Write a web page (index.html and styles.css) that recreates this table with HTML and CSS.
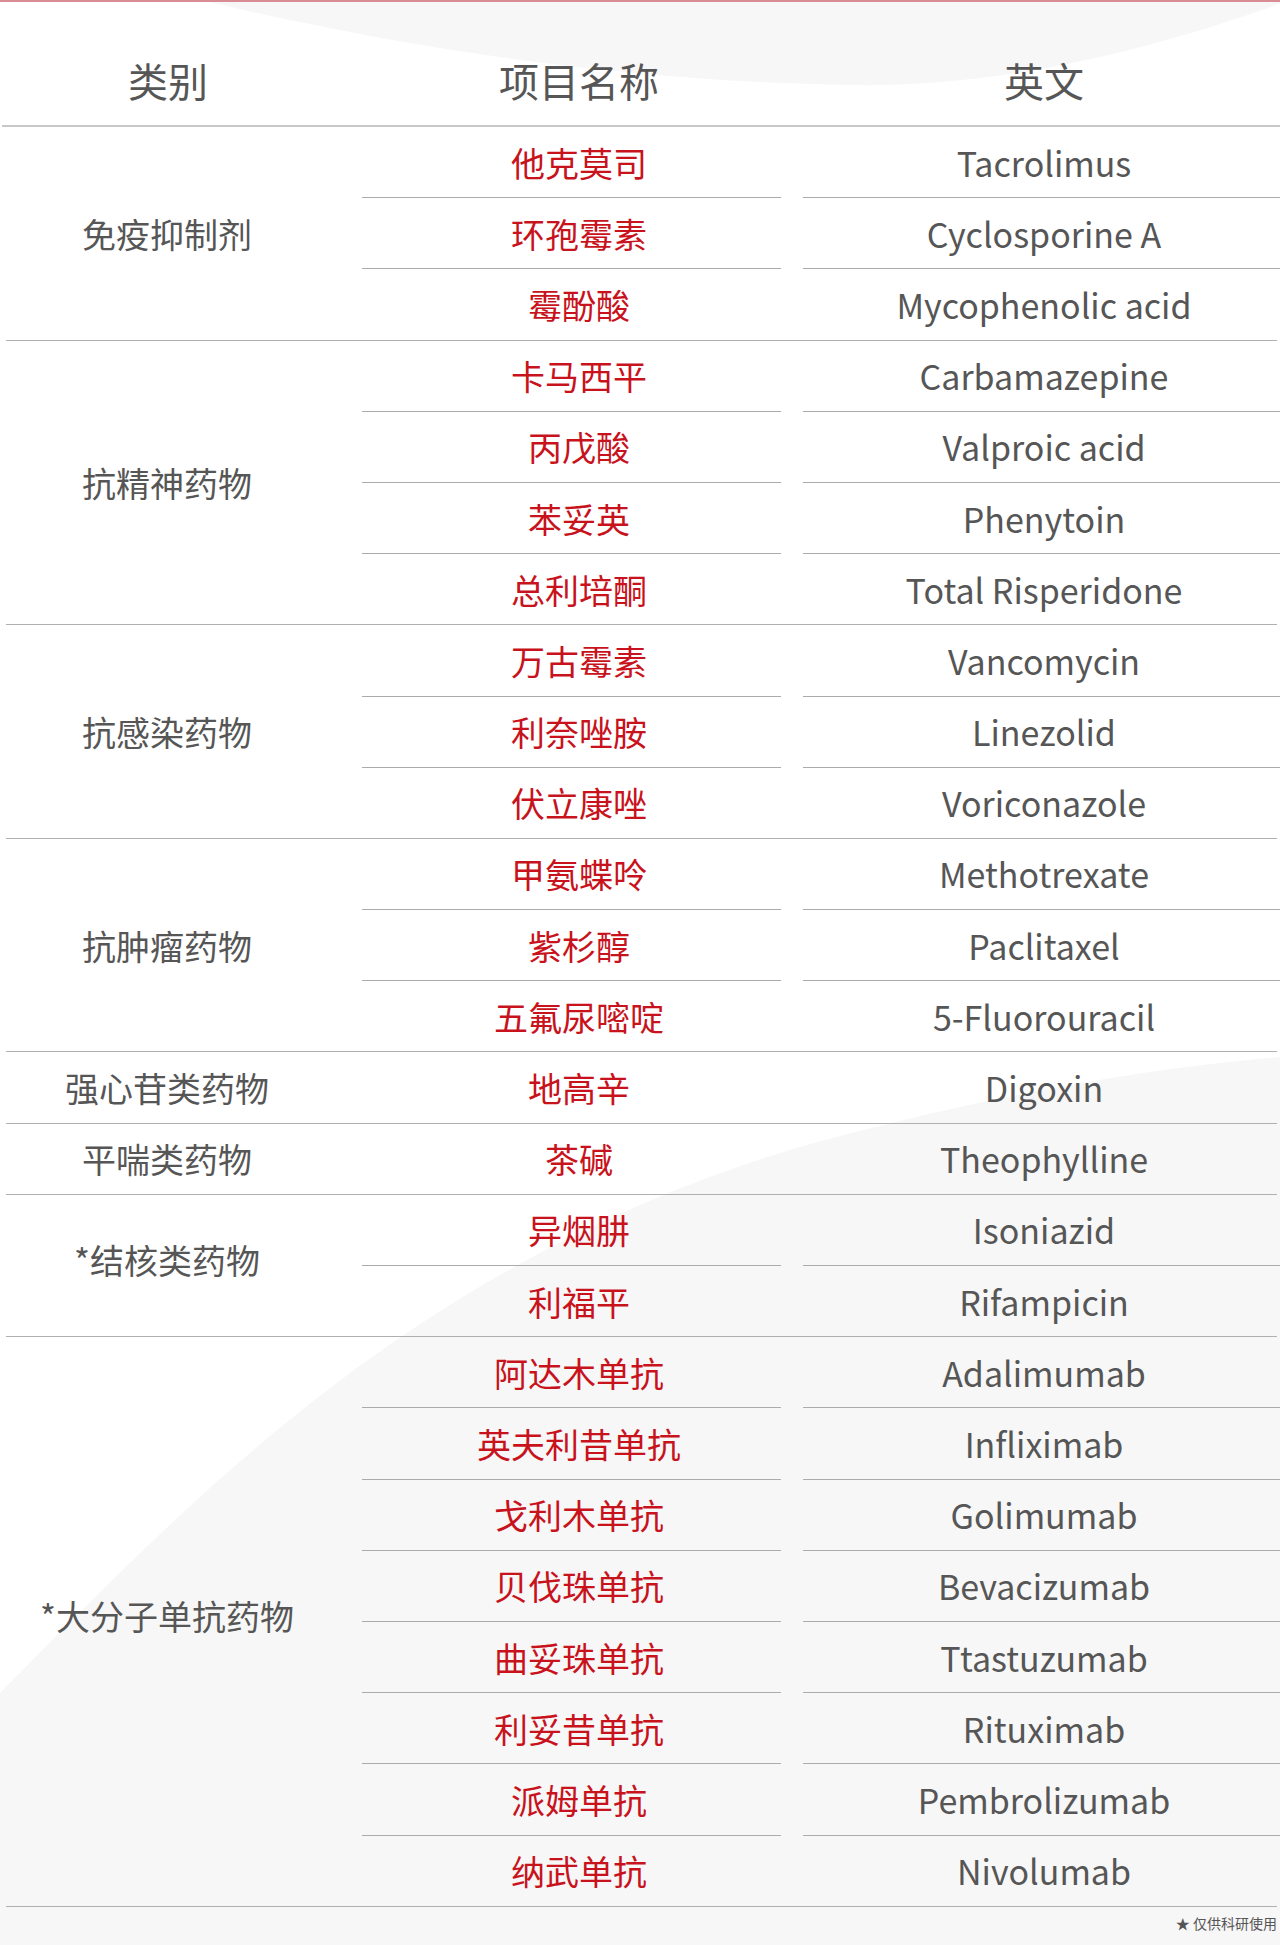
FILE: index.html
```html
<!DOCTYPE html>
<html lang="zh-CN">
<head>
<meta charset="utf-8">
<title>检测项目</title>
<link rel="stylesheet" href="styles.css">
</head>
<body>
<div class="page">
  <svg class="bg" width="1280" height="1945" viewBox="0 0 1280 1945" aria-hidden="true">
    <path class="shape" d="M200 0 C330 30 560 80 850 85 C1020 88 1180 40 1290 0 Z"/>
    <path class="shape" d="M0 1693 C200 1490 420 1260 800 1147 C950 1105 1120 1070 1280 1057 L1280 1945 L0 1945 Z"/>
  </svg>
  <div class="topline"></div>
  <div class="table">
    <div class="head">
      <div class="h c1">类别</div>
      <div class="h c2">项目名称</div>
      <div class="gap"></div>
      <div class="h c3">英文</div>
    </div>

    <div class="group">
      <div class="cat">免疫抑制剂</div>
      <div class="items">
        <div class="item"><div class="cn">他克莫司</div><div class="gap"></div><div class="en">Tacrolimus</div></div>
        <div class="item"><div class="cn">环孢霉素</div><div class="gap"></div><div class="en">Cyclosporine A</div></div>
        <div class="item"><div class="cn">霉酚酸</div><div class="gap"></div><div class="en">Mycophenolic acid</div></div>
      </div>
    </div>
    <div class="rule"></div>

    <div class="group">
      <div class="cat">抗精神药物</div>
      <div class="items">
        <div class="item"><div class="cn">卡马西平</div><div class="gap"></div><div class="en">Carbamazepine</div></div>
        <div class="item"><div class="cn">丙戊酸</div><div class="gap"></div><div class="en">Valproic acid</div></div>
        <div class="item"><div class="cn">苯妥英</div><div class="gap"></div><div class="en">Phenytoin</div></div>
        <div class="item"><div class="cn">总利培酮</div><div class="gap"></div><div class="en">Total Risperidone</div></div>
      </div>
    </div>
    <div class="rule"></div>

    <div class="group">
      <div class="cat">抗感染药物</div>
      <div class="items">
        <div class="item"><div class="cn">万古霉素</div><div class="gap"></div><div class="en">Vancomycin</div></div>
        <div class="item"><div class="cn">利奈唑胺</div><div class="gap"></div><div class="en">Linezolid</div></div>
        <div class="item"><div class="cn">伏立康唑</div><div class="gap"></div><div class="en">Voriconazole</div></div>
      </div>
    </div>
    <div class="rule"></div>

    <div class="group">
      <div class="cat">抗肿瘤药物</div>
      <div class="items">
        <div class="item"><div class="cn">甲氨蝶呤</div><div class="gap"></div><div class="en">Methotrexate</div></div>
        <div class="item"><div class="cn">紫杉醇</div><div class="gap"></div><div class="en">Paclitaxel</div></div>
        <div class="item"><div class="cn">五氟尿嘧啶</div><div class="gap"></div><div class="en">5-Fluorouracil</div></div>
      </div>
    </div>
    <div class="rule"></div>

    <div class="group">
      <div class="cat">强心苷类药物</div>
      <div class="items">
        <div class="item"><div class="cn">地高辛</div><div class="gap"></div><div class="en">Digoxin</div></div>
      </div>
    </div>
    <div class="rule"></div>

    <div class="group">
      <div class="cat">平喘类药物</div>
      <div class="items">
        <div class="item"><div class="cn">茶碱</div><div class="gap"></div><div class="en">Theophylline</div></div>
      </div>
    </div>
    <div class="rule"></div>

    <div class="group">
      <div class="cat cat-up">*结核类药物</div>
      <div class="items">
        <div class="item"><div class="cn">异烟肼</div><div class="gap"></div><div class="en">Isoniazid</div></div>
        <div class="item"><div class="cn">利福平</div><div class="gap"></div><div class="en">Rifampicin</div></div>
      </div>
    </div>
    <div class="rule"></div>

    <div class="group">
      <div class="cat cat-up">*大分子单抗药物</div>
      <div class="items">
        <div class="item"><div class="cn">阿达木单抗</div><div class="gap"></div><div class="en">Adalimumab</div></div>
        <div class="item"><div class="cn">英夫利昔单抗</div><div class="gap"></div><div class="en">Infliximab</div></div>
        <div class="item"><div class="cn">戈利木单抗</div><div class="gap"></div><div class="en">Golimumab</div></div>
        <div class="item"><div class="cn">贝伐珠单抗</div><div class="gap"></div><div class="en">Bevacizumab</div></div>
        <div class="item"><div class="cn">曲妥珠单抗</div><div class="gap"></div><div class="en">Ttastuzumab</div></div>
        <div class="item"><div class="cn">利妥昔单抗</div><div class="gap"></div><div class="en">Rituximab</div></div>
        <div class="item"><div class="cn">派姆单抗</div><div class="gap"></div><div class="en">Pembrolizumab</div></div>
        <div class="item"><div class="cn">纳武单抗</div><div class="gap"></div><div class="en">Nivolumab</div></div>
      </div>
    </div>
    <div class="rule"></div>
  </div>
  <div class="note">★ 仅供科研使用</div>
</div>
</body>
</html>
```

FILE: styles.css
```css
* { box-sizing: border-box; }
html, body { margin: 0; padding: 0; background: #fff; }
body {
  font-family: "Noto Sans CJK SC", "Noto Sans", sans-serif;
  font-weight: 400;
  color: #565656;
}
.page {
  position: relative;
  width: 1280px;
  height: 1945px;
  overflow: hidden;
}
.bg {
  position: absolute;
  left: 0;
  top: 0;
  z-index: 0;
}
.shape { fill: #f7f7f7; }
.topline {
  position: relative;
  z-index: 1;
  height: 2px;
  background: #d98d93;
}
.table {
  position: relative;
  z-index: 1;
}
.head {
  display: flex;
  height: 125px;
  padding-top: 33px;
  align-items: center;
  border-bottom: 2px solid #c8c8c8;
  margin-left: 2px;
}
.h {
  font-size: 40px;
  line-height: 1;
  text-align: center;
  color: #565656;
}
.c1 { width: 360px; padding-right: 28px; }
.c2 { width: 419px; padding-left: 15px; }
.head .gap { width: 22px; }
.c3 { width: 477px; padding-left: 5px; }

.group { display: flex; }
.cat {
  width: 362px;
  padding-right: 28px;
  display: flex;
  align-items: center;
  justify-content: center;
  font-size: 34px;
  color: #565656;
}
.cat-up { padding-bottom: 12px; }
.items { display: flex; flex-direction: column; }
.item {
  display: flex;
  height: 71.2px;
}
.item:last-child { height: 70.2px; }
.item .gap { width: 22px; }
.cn, .en {
  display: flex;
  align-items: center;
  justify-content: center;
  border-bottom: 1px solid #ababab;
  font-size: 34px;
}
.item:last-child .cn, .item:last-child .en { border-bottom: none; }
.cn { width: 419px; padding-left: 15px; color: #c8121c; }
.en { width: 477px; padding-left: 5px; color: #565656; }
.rule {
  height: 1px;
  margin: 0 3px 0 6px;
  background: #b0b0b0;
}
.note {
  position: relative;
  z-index: 1;
  text-align: right;
  padding-right: 3px;
  margin-top: 6px;
  font-size: 14px;
  line-height: 20px;
  color: #555;
}
```
